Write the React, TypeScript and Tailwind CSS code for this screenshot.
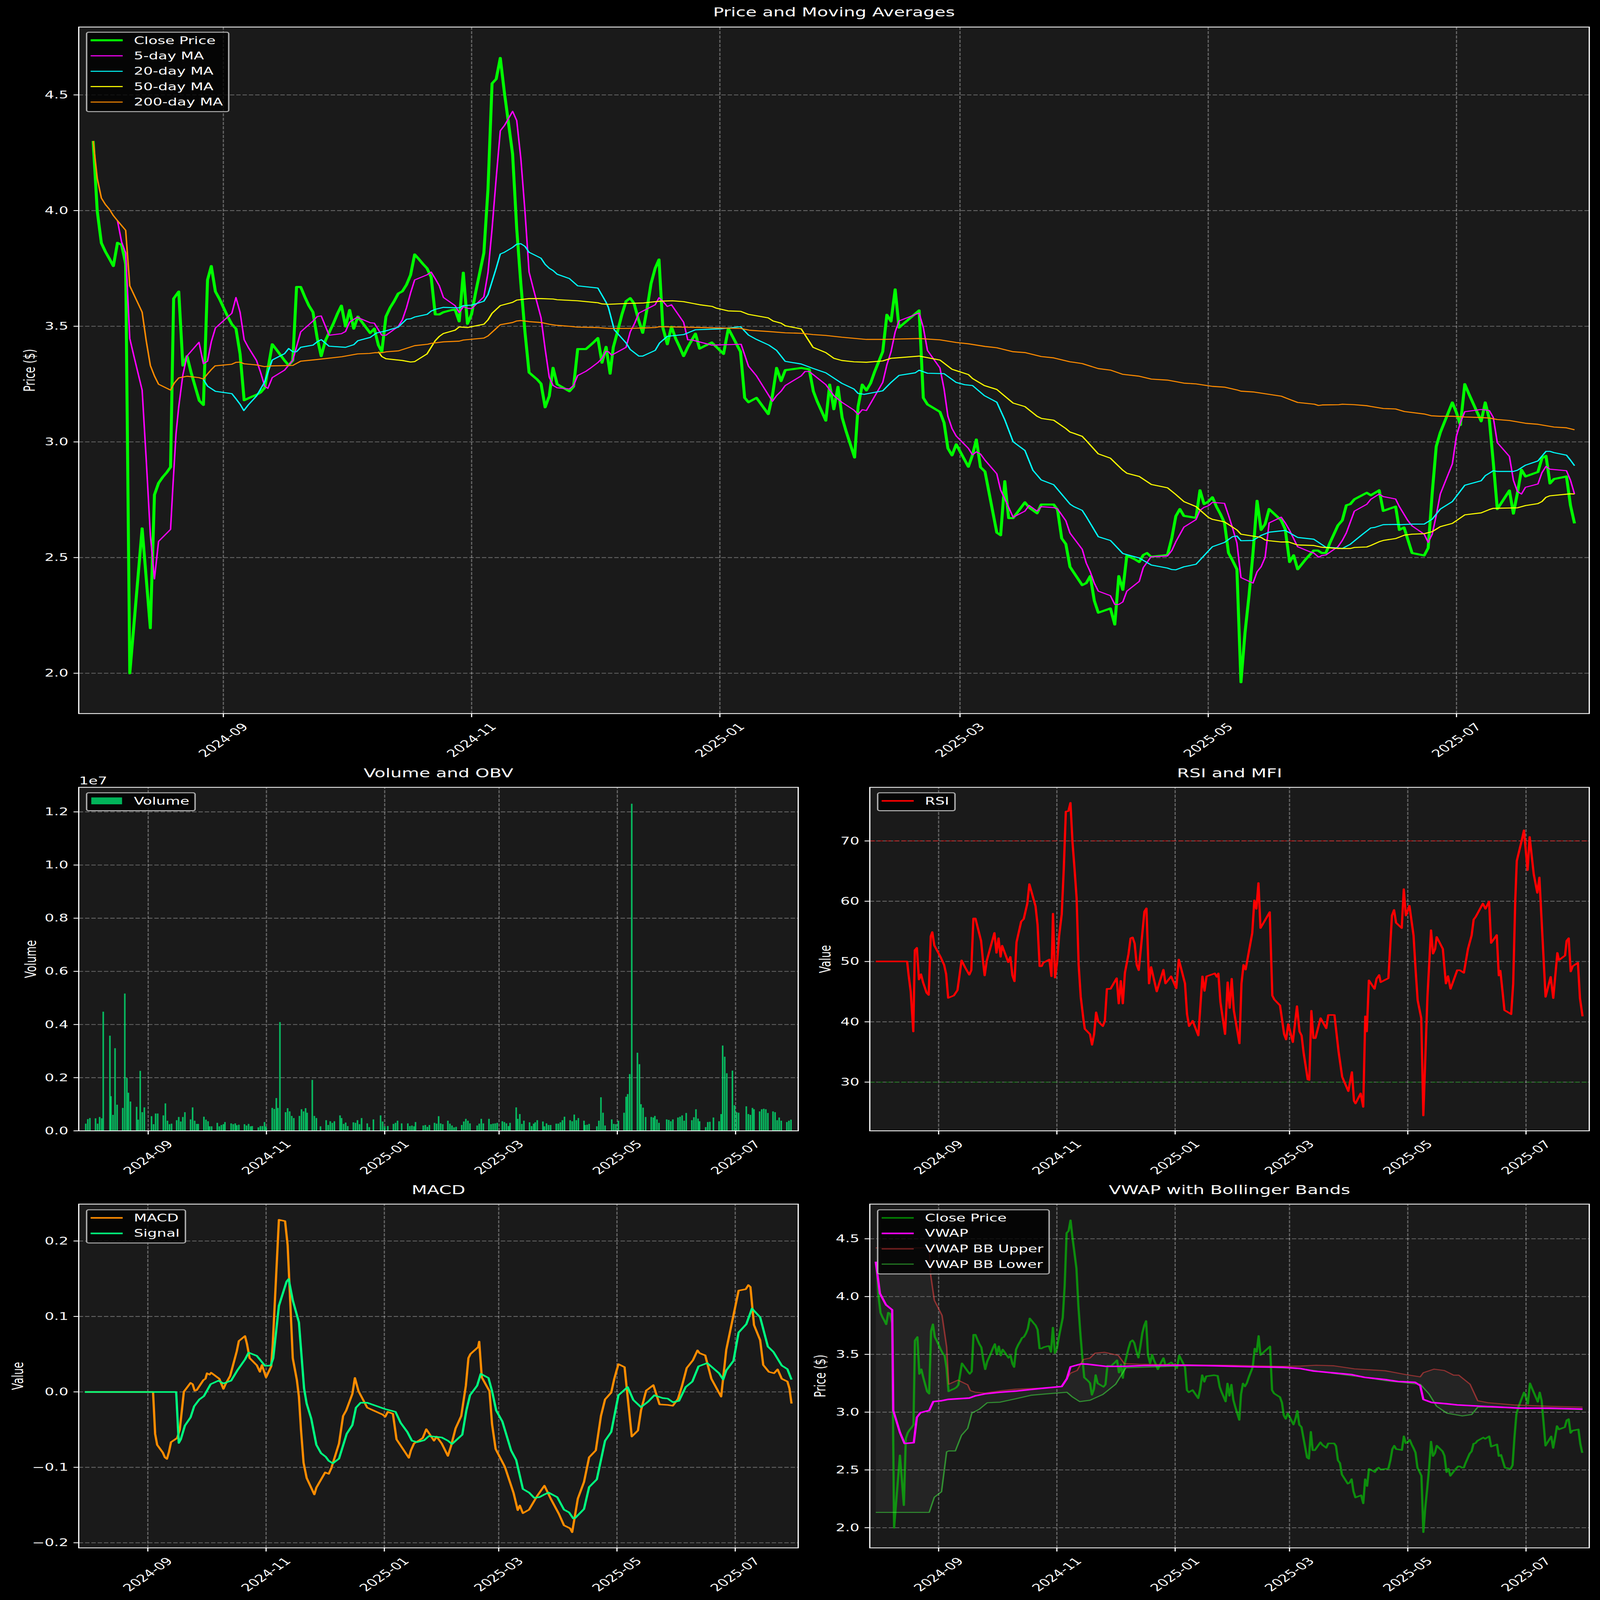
import React from 'react';

type Pt = [number, number];

// turn traced coordinates from a scan of the plot into page pixels
const scan = (ox: number, oy: number, sx: number, sy: number) => (f: number[]): Pt[] => {
  const out: Pt[] = [];
  for (let i = 0; i < f.length; i += 2) out.push([ox + f[i] / sx, oy + f[i + 1] / sy]);
  return out;
};
const z2 = scan(200, 100, 1568 / 1500, 1568 / 1400);
const z3 = scan(200, 1400, 1568 / 1500, 1568 / 1500);
const z4 = scan(1700, 100, 1568 / 1400, 1568 / 2800);
const z5 = scan(3000, 1300, 1568 / 1470, 1568 / 1600);
const z6 = scan(0, 3100, 1568 / 2250, 1568 / 1700);
const z7 = scan(2220, 3100, 1568 / 2250, 1568 / 1700);
const z8 = scan(0, 4750, 1568 / 2250, 1568 / 1757);
const z9 = scan(2220, 4750, 1568 / 2250, 1568 / 1757);

const close: Pt[] = [
  ...z2([63,530,75,850,87,995,99,1035,110,1065,122,1100,134,994,146,1003,158,1090]),
  ...z3([170,1399,206,783,218,995,230,1207,242,640,254,590,266,565,278,545,289,522]),
  ...z2([298,1248,313,1216,325,1553,337,1510]),
  ...z3([349,120,361,180,373,240,385,258]),
  ...z2([397,1163,408,1100,420,1216,432,1250,444,1290,456,1330,468,1365,480,1385,492,1500]),
  ...z3([504,238,516,230,528,222,540,215,552,205,564,185,586,0]),
  ...z2([598,1480,610,1505,622,1530,634,1552,646,1530,657,1195,669,1195,681,1240,693,1280,705,1310,717,1425,729,1510,741,1440,753,1400,765,1360,777,1315,788,1280,800,1375,812,1300,824,1385,836,1330,848,1355,860,1380,872,1405,884,1385,896,1460,906,1490,918,1330,930,1290,942,1260,954,1225,966,1215,978,1185,990,1140,1002,1047,1014,1068,1026,1090,1038,1110,1050,1150,1062,1320,1074,1320,1086,1310,1098,1305,1110,1300,1120,1298,1132,1352,1144,1130,1156,1363,1168,1320,1180,1220,1192,1130,1204,1040,1216,750,1228,268,1240,248,1252,152,1264,310,1276,450,1288,590,1300,930,1312,1180,1324,1400]),
  ...z3([1336,120,1348,135,1360,150,1371,168,1383,268,1395,220,1406,100,1418,170,1430,180,1442,190,1454,200,1466,180]),
  ...z2([1478,1478,1502,1478,1514,1462,1526,1445,1537,1428,1549,1540,1561,1468]),
  ...z4([5,795,15,735,28,700,42,660,55,630,68,623,80,635,93,670,107,702,120,650,133,590,146,555,158,535,170,690,184,728,197,688,210,715,223,735,235,755,248,735,272,704,285,738,298,733,323,724,336,733,360,750,375,692,388,710,413,745,426,850,438,860,463,850,500,887,513,845,526,782,540,812,553,787,603,782,628,785,641,835,653,858,680,902,692,820,705,876,718,825,731,895,743,925,770,986,781,870,794,820,807,833,820,817,833,790,858,745,871,661,884,676,897,603,909,690,972,651,985,850,998,865,1037,882,1050,907,1062,965,1075,981,1088,956,1126,1007,1139,980,1151,945,1164,1008,1178,1018,1215,1157,1227,1163,1240,1040,1252,1124,1266,1124,1303,1088,1316,1100,1341,1113,1354,1093,1393,1093,1405,1105,1418,1170,1431,1183,1444,1235]),
  ...z5([25,1058,37,1050,49,1022,61,1120,73,1168,109,1151,122,1215,134,1022,146,1077,158,940,182,955,195,966,207,938,218,930,230,945,279,938,292,870,304,783,316,755,328,782,364,790,376,680,388,735,401,725,413,708,425,745,437,775,449,810,461,930,473,960,486,995,498,1445,510,1250,522,1100,534,930,546,722,558,838,570,815,582,755,618,800,630,835,643,966,655,939,667,995,691,955,715,920,727,920,739,930,751,930,763,890,775,855,787,820,800,800,812,740,824,735,836,716,873,690,885,700,910,680,922,762,959,745,970,838,984,828,1008,930,1044,940,1056,910,1068,690,1080,505,1092,450,1128,330,1140,370,1152,420,1165,257,1177,295,1214,405,1226,330,1238,395,1250,570,1262,755,1298,681,1310,773,1322,690,1334,598,1346,625,1383,607,1395,552,1407,543,1419,653,1431,635,1468,625,1480,740,1492,812]),
];

const ma5: Pt[] = [
  ...z2([134,893,146,990,158,1040,170,1430,182,1510]),
  ...z3([206,195,218,490,224,650,230,810,242,998,254,838,289,787,296,600,305,380,313,265,325,130,337,50]),
  ...z2([372,1447,385,1545,397,1533,408,1445,420,1382,468,1315,480,1243,492,1310,504,1435,516,1470,540,1530]),
  ...z3([552,120,564,178,573,188,586,142,622,110,646,68]),
  ...z2([669,1400,705,1350,717,1330,729,1327,752,1415,788,1408,800,1398,812,1355,834,1333,872,1358,884,1360,906,1415,918,1415,954,1375,966,1345,978,1290,990,1222,1002,1163,1038,1140,1050,1127,1062,1157,1074,1190,1086,1243,1120,1280,1132,1312,1144,1285,1156,1292,1168,1294,1204,1240,1216,1130,1228,930,1240,700,1252,484,1264,460,1288,395,1300,437,1312,610,1324,850,1336,1127,1348,1200,1371,1335]),
  ...z3([1383,20,1395,140,1406,175,1418,185,1454,190,1466,175,1478,133,1502,115,1514,103,1526,90,1537,78,1549,60,1561,30]),
  ...z4([0,745,10,753,55,735,68,700,82,680,95,657,146,638,158,622,170,630,184,642,197,638,235,678,248,718,260,718,323,730,415,728,438,778,463,800,513,858,526,845,540,835,553,822,603,800,615,790,628,790,680,820,705,845,730,860,768,878,781,888,794,877,807,879,858,815,871,775,884,745,897,700,909,675,972,657,985,690,998,742,1037,782,1050,830,1062,892,1075,920,1088,937,1126,965,1139,980,1151,973,1164,978,1178,992,1215,1023,1227,1060,1240,1080,1266,1122,1303,1108,1316,1095,1341,1108,1354,1098,1393,1100,1405,1103,1431,1130,1444,1158]),
  ...z5([25,915,37,970,49,1005,61,1050,73,1082,109,1100,122,1135,134,1135,146,1125,158,1082,195,1043,207,988,230,945,279,942,292,920,304,885,328,827,364,797,376,760,388,748,401,742,413,728,449,732,461,780,473,830,486,890,498,1028,534,1050,546,1005,558,985,570,948,582,810,618,787,630,810,643,840,667,905,703,925,715,930,730,947,739,940,751,938,787,905,800,880,812,850,836,763,873,736,885,716,910,695,922,705,959,715,970,745,995,800,1008,822,1044,855,1056,888,1068,855,1080,780,1092,695,1128,575,1140,465,1152,410,1165,367,1214,358,1238,362,1250,390,1262,490,1298,545,1310,640,1322,685,1334,695,1346,668,1383,655,1395,610,1407,585,1419,596,1468,602,1480,640,1492,695]),
];

const ma20: Pt[] = [
  ...z3([385,150,397,178,420,200,468,210,480,232,492,255,503,282,516,258,540,220,552,190,564,160,572,125,586,67,622,40,634,18,646,32]),
  ...z2([657,1490,669,1470,705,1460,717,1445,729,1435,752,1465,800,1470,824,1458,836,1440,872,1425,890,1405,918,1395,954,1378,978,1342,990,1340,1002,1332,1038,1320,1050,1305,1062,1297,1086,1288,1132,1290,1144,1280,1168,1278,1204,1260,1216,1230,1240,1110,1252,1045,1264,1037,1288,1015,1300,1000,1312,998,1324,1010,1336,1037,1371,1064,1383,1092,1395,1110,1406,1120,1418,1137,1454,1157,1478,1190,1537,1200,1561,1265]),
  ...z4([0,645,18,695,55,725,68,740,95,755,107,755,146,742,160,725,184,710,235,706,272,695,350,693,413,688,438,707,463,717,502,730,526,742,553,767,603,773,640,783,680,793,730,817,768,830,781,840,800,842,858,834,884,815,909,799,960,793,972,787,998,794,1050,795,1088,815,1114,820,1139,822,1176,845,1215,860,1240,900,1266,950,1303,970,1328,1015,1354,1037,1393,1048,1444,1092]),
  ...z5([0,745,25,760,37,785,73,865,109,880,146,932,195,950,231,978,279,990,292,996,304,997,328,985,364,975,401,922,413,905,449,888,473,865,486,862,498,881,534,880,558,860,582,847,630,840,667,868,715,875,751,907,787,910,800,912,824,895,861,855,885,830,897,828,922,817,960,816,975,817,1008,815,1044,815,1068,795,1092,755,1128,725,1165,660,1214,642,1226,622,1250,602,1262,605,1310,605,1322,600,1346,580,1383,563,1407,525,1419,525,1431,530,1468,540,1480,560,1492,582]),
];

const ma50: Pt[] = [
  ...z2([896,1490,906,1512,918,1522,966,1530,990,1537,1002,1535,1038,1500,1062,1440,1074,1420,1086,1407,1120,1392,1132,1377,1156,1380,1204,1365,1216,1345,1228,1315,1252,1280,1288,1265,1300,1255,1336,1248,1371,1248,1406,1250,1418,1253,1478,1258,1537,1267,1548,1272]),
  ...z4([0,637,60,635,110,634,160,630,200,629,235,631,285,638,325,642,338,646,374,652,413,653,438,660,500,668,515,675,540,680,553,686,603,693,640,735,680,747,705,760,730,765,768,768,807,769,858,766,884,760,972,755,1037,764,1075,785,1088,788,1126,797,1139,806,1176,822,1215,831,1266,862,1303,870,1341,892,1355,897,1393,901,1431,920,1444,928]),
  ...z5([0,453,25,465,37,482,73,535,109,552,146,600,158,612,195,625,231,657,279,670,304,697,328,725,364,745,401,788,413,796,449,806,486,838,498,855,558,868,570,878,582,881,618,886,640,886,667,898,715,900,739,907,787,912,824,912,836,908,873,906,885,900,910,885,922,880,960,872,985,859,1008,855,1044,853,1068,845,1092,825,1128,812,1165,778,1214,770,1238,757,1250,752,1322,750,1346,741,1383,733,1395,725,1407,708,1419,702,1480,694,1492,695]),
];

const ma200: Pt[] = [
  ...z2([63,530,75,700,87,790,99,820,110,840,122,870,134,893,146,915,158,937,170,1190,182,1230,194,1270,206,1310,218,1440]),
  ...z3([230,90,242,135,254,170,289,195,300,165,313,143,337,136,372,142,385,148,396,128,408,108,419,92,468,85,480,77,492,76,504,83,540,88,563,95,586,92,646,90,669,72,717,65,789,53,835,41,870,39,885,36,906,36,920,32,955,28,987,13,1002,6,1040,0]),
  ...z2([1050,1452,1086,1445,1132,1442,1144,1437,1204,1428,1216,1418,1252,1367,1288,1357,1300,1350,1312,1348,1336,1353,1371,1357,1395,1365,1418,1370,1454,1374,1478,1378,1537,1380]),
  ...z4([0,692,60,692,110,691,146,690,160,688,235,689,350,691,413,692,440,696,500,699,553,702,603,703,640,706,680,708,730,712,807,717,858,717,972,715,1037,718,1088,724,1126,727,1178,733,1215,736,1266,745,1303,747,1354,756,1393,759,1444,768]),
  ...z5([0,170,25,175,73,195,109,201,146,218,193,225,231,237,279,241,328,253,364,256,414,266,449,269,486,280,498,285,534,288,618,305,667,330,717,337,729,342,740,340,790,339,800,337,836,339,873,343,885,346,922,354,959,356,985,366,1044,376,1065,383,1092,385,1128,385,1165,388,1214,390,1238,392,1262,398,1298,402,1346,413,1383,417,1431,428,1468,431,1492,439]),
];

const volume = [167,27,171,44,175,48,186,47,190,27,194,52,198,47,201,447,214,357,216,130,220,60,224,310,228,98,239,86,243,515,247,198,250,143,254,110,266,90,269,42,273,225,277,70,281,88,295,55,299,25,303,65,307,65,318,58,322,103,326,38,330,25,334,27,344,40,348,52,352,35,356,52,360,70,371,43,375,88,379,38,383,26,386,26,397,53,401,42,405,36,408,17,412,17,423,30,427,17,431,22,435,25,438,33,450,28,454,25,458,28,461,21,465,23,476,25,480,20,484,26,488,17,491,18,503,13,507,18,511,18,515,33,518,16,530,86,534,82,538,123,541,86,545,408,556,70,560,85,564,73,568,56,572,48,583,56,587,81,591,73,595,85,598,68,608,191,612,56,616,48,624,17,635,40,639,22,643,36,647,30,651,36,662,58,665,48,669,26,673,31,677,18,688,32,692,30,696,40,700,25,704,48,715,28,719,14,727,43,741,58,745,35,749,17,755,18,766,26,770,30,774,38,782,28,794,28,798,18,802,20,806,17,809,33,824,20,828,22,832,15,836,22,846,30,850,27,854,55,858,28,862,25,872,38,876,27,880,20,884,13,888,15,899,22,903,35,907,45,911,38,915,28,929,20,933,27,937,45,941,28,952,45,956,25,960,27,964,28,968,30,978,36,982,33,986,28,990,18,993,30,1005,88,1008,45,1012,63,1016,26,1020,38,1031,32,1035,18,1039,27,1042,32,1046,40,1057,35,1060,17,1064,28,1068,22,1072,22,1083,27,1087,27,1091,32,1095,40,1099,53,1110,40,1114,36,1118,61,1122,40,1126,48,1137,38,1139,22,1143,23,1147,26,1162,17,1166,38,1170,126,1174,68,1178,20,1191,43,1195,26,1199,25,1204,38,1215,68,1219,128,1222,138,1226,213,1230,1227,1241,293,1245,250,1248,100,1252,87,1257,52,1268,52,1272,50,1275,56,1279,43,1283,30,1298,43,1302,41,1306,36,1310,43,1320,50,1324,53,1328,58,1332,38,1336,67,1347,40,1351,51,1355,81,1359,46,1362,36,1374,14,1378,33,1382,34,1389,50,1400,36,1404,63,1407,320,1411,278,1415,216,1426,226,1430,96,1434,70,1438,68,1453,92,1457,63,1461,60,1465,86,1468,81,1479,73,1483,81,1487,83,1491,81,1495,67,1505,73,1509,70,1513,40,1517,50,1521,38,1532,33,1536,38,1540,42];

const rsi = z7([158,747,219,747,222,800,226,860,231,1010,234,705,238,696,242,815,246,795,250,825,257,865,261,873,265,653,268,637,272,687,284,730,291,760,295,795,299,884,310,875,317,855,321,800,325,743,332,770,340,797,344,780,348,586,352,586,363,670,367,750,370,800,374,745,389,640,393,715,397,660,401,730,404,688,416,750,420,730,424,800,428,822,432,675,441,598,446,588,453,530,457,457,469,540,473,610,477,765,481,765,484,752,496,740,500,803,503,568,507,808,511,750,515,650,520,570,524,400,528,185,533,183,537,152,541,300,545,400,549,510,553,760,557,880,562,960,565,1000,575,1020,579,1060,583,1020,587,938,591,972,600,990,604,970,608,850,615,850,627,810,631,905,635,820,639,905,643,790,650,720,654,660,658,657,662,680,666,760,670,780,674,700,681,560,685,548,690,830,694,768,705,860,718,778,722,830,733,803,743,848,748,740,760,830,764,945,768,990,775,970,786,1025,794,803,798,858,802,803,818,792,822,805,825,792,829,900,838,1020,843,825,847,922,851,812,855,930,866,1055,870,830,874,760,878,778,891,640,895,518,899,550,903,453,907,622,925,562,930,875,934,890,945,912,953,1020,957,1040,961,982,970,1050,978,915,983,1010,987,1025,991,1090,999,1190,1002,1192,1006,932,1010,1035,1014,1035,1024,960,1035,998,1039,948,1051,948,1059,1085,1066,1180,1078,1234,1085,1162,1089,1270,1092,1280,1102,1242,1107,1293,1111,953,1114,1010,1118,818,1129,850,1133,812,1138,798,1141,825,1156,810,1163,575,1167,554,1171,602,1182,622,1186,476,1190,575,1197,538,1205,650,1209,780,1213,893,1220,960,1224,1325,1232,880,1239,630,1243,718,1247,700,1250,655,1262,700,1268,830,1272,802,1277,850,1290,780,1295,780,1303,790,1311,700,1318,650,1322,590,1326,580,1340,530,1345,550,1352,522,1356,678,1367,648,1371,800,1374,782,1382,930,1395,945,1399,830,1403,520,1406,370,1416,290,1420,255,1427,405,1431,280,1439,420,1446,490,1450,432,1455,620,1462,880,1472,805,1477,885,1485,715,1488,742,1500,725,1503,670,1507,660,1511,785,1515,765,1525,752,1529,885,1534,953]);

const macd = z8([165,813,298,813,302,965,306,1005,317,1033,321,1050,325,1056,329,1030,333,995,345,980,350,950,358,812,371,780,375,785,379,808,383,806,396,770,400,765,403,745,408,750,411,743,427,765,435,802,439,785,448,755,461,665,465,628,477,610,481,640,486,690,500,716,506,740,510,715,518,760,528,720,531,640,539,340,543,188,555,193,560,280,565,480,570,690,578,770,582,830,586,950,591,1070,597,1125,612,1185,616,1160,633,1105,640,1110,645,1090,660,1000,668,900,674,880,686,820,691,762,698,810,715,870,727,880,745,895,750,903,755,885,765,892,772,985,796,1052,800,1025,806,1000,815,990,823,980,830,948,845,990,850,975,860,1000,872,1045,878,1010,887,945,898,900,907,790,912,690,916,675,931,650,933,630,938,760,953,810,958,930,965,1020,983,1085,1000,1180,1008,1242,1012,1225,1018,1253,1030,1240,1046,1190,1060,1153,1073,1203,1088,1255,1098,1297,1110,1308,1114,1322,1125,1200,1137,1140,1147,1050,1160,1025,1170,900,1178,840,1190,815,1196,765,1204,712,1216,723,1230,975,1242,953,1248,880,1258,808,1272,788,1284,858,1300,860,1310,863,1320,838,1328,790,1337,726,1349,698,1358,662,1362,672,1373,680,1385,765,1404,830,1414,660,1433,490,1438,445,1452,440,1457,425,1461,432,1468,570,1480,625,1486,715,1497,740,1507,745,1514,731,1522,765,1533,775,1537,800,1541,855]);

const signal = z8([165,813,343,813,348,998,352,985,360,935,371,905,378,865,388,840,397,828,410,785,425,772,435,782,450,772,462,735,477,695,484,670,500,682,516,718,527,717,532,690,543,500,558,412,562,403,570,480,582,560,592,800,597,855,606,910,616,1005,625,1035,634,1048,640,1063,648,1072,660,1055,675,965,686,933,693,870,702,852,715,852,730,862,750,875,770,885,780,925,793,958,802,990,812,995,826,988,835,973,860,978,872,990,880,1002,890,985,900,968,908,880,915,825,929,790,936,747,951,762,958,810,966,880,978,920,995,1025,1005,1060,1018,1165,1030,1178,1040,1197,1050,1195,1060,1185,1068,1178,1085,1195,1098,1240,1108,1250,1116,1272,1120,1270,1137,1238,1147,1158,1162,1130,1178,990,1190,958,1204,825,1222,795,1233,842,1248,868,1262,848,1274,825,1290,835,1300,837,1310,850,1322,845,1335,795,1348,775,1360,720,1377,708,1400,745,1408,768,1414,735,1428,700,1438,597,1453,567,1464,510,1480,542,1495,648,1506,668,1522,717,1533,730,1541,768]);

const vwap = z9([158,340,166,455,178,497,190,515,192,880,205,960,214,1000,232,997,238,905,245,888,262,880,270,848,285,845,298,840,340,835,352,827,370,820,400,814,430,810,465,803,480,800,520,793,530,765,537,722,558,711,570,712,606,720,640,720,680,717,760,716,820,718,900,722,950,723,985,728,1010,737,1050,744,1085,750,1110,760,1150,768,1175,775,1208,778,1218,790,1224,840,1240,851,1270,856,1290,860,1340,865,1395,870,1410,872,1470,872,1534,875]);
const bbUpper = z9([158,290,262,290,265,390,272,480,287,535,296,650,300,785,318,770,337,787,342,808,352,814,370,817,403,808,430,803,500,797,520,793,537,745,550,735,562,695,575,690,585,672,603,669,630,680,642,710,670,712,740,714,850,716,950,720,985,719,1015,716,1050,718,1090,729,1150,736,1190,750,1218,758,1224,743,1245,730,1265,735,1283,752,1293,752,1315,785,1330,845,1350,852,1400,860,1470,865,1534,868]);
const bbLower = z9([158,1250,262,1250,272,1195,286,1175,296,1030,300,1027,313,1027,325,970,337,945,345,890,360,875,375,852,400,850,430,838,460,825,490,820,530,814,540,830,555,848,575,843,600,822,625,785,640,740,645,725,700,722,760,718,820,718,900,722,985,728,1050,746,1110,760,1150,772,1218,785,1235,820,1250,865,1270,890,1300,900,1318,895,1330,868,1400,870,1534,877]);

// the close series again, rescaled from the big chart to the VWAP chart
const closeSmall: Pt[] = close.map(([x, y]) => {
  const day = (x - 624) / 11.37;
  const price = 2 + (2738 - y) / 940.8;
  return [2622.3 + day * 5.416, 6213 - (price - 2) * 470];
});

const months = ['2024-09', '2024-11', '2025-01', '2025-03', '2025-05', '2025-07'];
const days = [0, 61, 122, 181, 242, 303];

type Box = { left: number; top: number; right: number; bottom: number };

function toPoints(p: Pt[]) {
  return p.map(([x, y]) => `${x.toFixed(1)},${y.toFixed(1)}`).join(' ');
}

function Line({ pts, color, w = 4.17, opacity = 1 }: { pts: Pt[]; color: string; w?: number; opacity?: number }) {
  return <polyline points={toPoints(pts)} fill="none" stroke={color} strokeWidth={w} strokeOpacity={opacity} strokeLinejoin="round" />;
}

function Plot({ box, x0, xk, panelLeft, panelWidth, height, yticks, yLabel, yLabelX, children }: {
  box: Box; x0: number; xk: number; panelLeft: number; panelWidth: number; height: number;
  yticks: [string, number][]; yLabel: string; yLabelX: number; children?: React.ReactNode;
}) {
  const xs = days.map((d) => x0 + d * xk);
  const midY = (box.top + box.bottom) / 2;
  return (
    <svg
      width={panelWidth}
      height={height}
      viewBox={`${panelLeft} ${box.top} ${panelWidth} ${height}`}
      className="block overflow-visible"
    >
      <rect x={box.left} y={box.top} width={box.right - box.left} height={box.bottom - box.top} fill="#1a1a1a" />
      <g stroke="#ffffff" strokeOpacity={0.33} strokeWidth={3.33} strokeDasharray="12.3 5.3">
        {xs.map((x) => <line key={x} x1={x} x2={x} y1={box.bottom} y2={box.top} />)}
        {yticks.map(([l, y]) => <line key={l} x1={box.left} x2={box.right} y1={y} y2={y} />)}
      </g>
      {children}
      <rect x={box.left} y={box.top} width={box.right - box.left} height={box.bottom - box.top} fill="none" stroke="#ffffff" strokeWidth={3.33} />
      <g stroke="#ffffff" strokeWidth={3.33}>
        {xs.map((x) => <line key={x} x1={x} x2={x} y1={box.bottom} y2={box.bottom + 14.6} />)}
        {yticks.map(([l, y]) => <line key={l} x1={box.left - 14.6} x2={box.left} y1={y} y2={y} />)}
      </g>
      <g className="fill-white text-[41.67px]">
        {yticks.map(([l, y]) => (
          <text key={l} x={box.left - 29} y={y} textAnchor="end" dominantBaseline="central">{l}</text>
        ))}
        {xs.map((x, i) => (
          <text key={x} transform={`translate(${x} ${box.bottom + 108}) rotate(-45)`} textAnchor="middle" dominantBaseline="central">{months[i]}</text>
        ))}
        <text
          transform={`translate(${yLabelX} ${midY}) rotate(-90)`}
          textAnchor="middle"
          dominantBaseline="central"
        >
          {yLabel}
        </text>
      </g>
    </svg>
  );
}

type Item = { label: string; color: string; w?: number; opacity?: number; patch?: boolean };

function Legend({ items, className }: { items: Item[]; className: string }) {
  return (
    <div className={`absolute flex flex-col rounded-[8px] border-[4px] border-[#adadad] bg-black/80 pb-[6px] pr-[14px] text-[41.67px] leading-none text-white ${className}`}>
      {items.map((it) => (
        <div key={it.label} className="flex h-[62.7px] items-center gap-[31px] pl-[9px] whitespace-nowrap">
          <svg width={90} height={30} className="block">
            {it.patch ? (
              <rect x={2} y={1} width={86} height={28} fill={it.color} fillOpacity={it.opacity ?? 1} />
            ) : (
              <line x1={0} x2={90} y1={15} y2={15} stroke={it.color} strokeWidth={it.w ?? 4.17} strokeOpacity={it.opacity ?? 1} />
            )}
          </svg>
          <span>{it.label}</span>
        </div>
      ))}
    </div>
  );
}

function tickFrom(labels: string[], first: number, step: number): [string, number][] {
  return labels.map((l, i) => [l, first + i * step]);
}

export default function App() {
  const mainBox = { left: 220, top: 110, right: 4440, bottom: 2902 };
  const volBox = { left: 220, top: 3202, right: 2230, bottom: 4599 };
  const rsiBox = { left: 2430, top: 3202, right: 4440, bottom: 4599 };
  const macdBox = { left: 220, top: 4897, right: 2230, bottom: 6295 };
  const vwapBox = { left: 2430, top: 4897, right: 4440, bottom: 6295 };

  // the sheet is 4470x6507; fit it to whatever window it really gets (1 at full size)
  const fit = { x: window.innerWidth / 4470, y: window.innerHeight / 6507 };

  return (
    <div className="h-screen w-screen overflow-hidden bg-black">
      <div
        className="flex h-[6507px] w-[4470px] origin-top-left flex-col bg-black font-['DejaVu_Sans',sans-serif] text-white"
        style={{ transform: `scale(${fit.x}, ${fit.y})` }}
      >
        <section className="h-[3088px]">
          <h2 className="flex h-[110px] items-start justify-center pl-[220px] pr-[30px] pt-[22px] text-[50px] font-normal leading-[56px]">
            Price and Moving Averages
          </h2>
          <div className="relative">
            <Plot
              box={mainBox}
              x0={624}
              xk={11.37}
              panelLeft={0}
              panelWidth={4470}
              height={2978}
              yticks={tickFrom(['4.5', '4.0', '3.5', '3.0', '2.5', '2.0'], 386, 470.4)}
              yLabel="Price ($)"
              yLabelX={83}
            >
              <Line pts={close} color="#00ff00" w={8.33} />
              <Line pts={ma5} color="#ff00ff" />
              <Line pts={ma20} color="#00ffff" />
              <Line pts={ma50} color="#ffff00" />
              <Line pts={ma200} color="#ff8c00" />
            </Plot>
            <Legend
              className="left-[240px] top-[19px]"
              items={[
                { label: 'Close Price', color: '#00ff00', w: 8.33 },
                { label: '5-day MA', color: '#ff00ff' },
                { label: '20-day MA', color: '#00ffff' },
                { label: '50-day MA', color: '#ffff00' },
                { label: '200-day MA', color: '#ff8c00' },
              ]}
            />
          </div>
        </section>

        <section className="grid h-[1695px] grid-cols-2">
          <div>
            <h2 className="flex h-[114px] items-center justify-center pl-[220px] pr-[5px] text-[50px] font-normal leading-none">Volume and OBV</h2>
            <div className="relative">
              <Plot
                box={volBox}
                x0={414}
                xk={5.416}
                panelLeft={0}
                panelWidth={2235}
                height={1581}
                yticks={tickFrom(['0.0', '0.2', '0.4', '0.6', '0.8', '1.0', '1.2'], 4599, -216.2)}
                yLabel="Volume"
                yLabelX={86}
              >
                {z6(volume).map(([x, h], i) => (
                  <rect key={i} x={x - 2.2} y={4599 - (h - 3100)} width={4.4} height={h - 3100} fill="#00ff7f" fillOpacity={0.7} />
                ))}
                <text x={221} y={3176} dominantBaseline="central" className="fill-white text-[41.67px]">1e7</text>
              </Plot>
              <Legend className="left-[240px] top-[20px]" items={[{ label: 'Volume', color: '#00ff7f', opacity: 0.7, patch: true }]} />
            </div>
          </div>
          <div>
            <h2 className="flex h-[114px] items-center justify-center pl-[195px] pr-[30px] text-[50px] font-normal leading-none">RSI and MFI</h2>
            <div className="relative">
              <Plot
                box={rsiBox}
                x0={2622.3}
                xk={5.416}
                panelLeft={2235}
                panelWidth={2235}
                height={1581}
                yticks={tickFrom(['70', '60', '50', '40', '30'], 3420, 245.2)}
                yLabel="Value"
                yLabelX={2306}
              >
                <line x1={2430} x2={4440} y1={3420} y2={3420} stroke="#ff0000" strokeOpacity={0.5} strokeWidth={4.17} strokeDasharray="15.4 6.7" />
                <line x1={2430} x2={4440} y1={4401} y2={4401} stroke="#008000" strokeOpacity={0.5} strokeWidth={4.17} strokeDasharray="15.4 6.7" />
                <Line pts={rsi} color="#ff0000" w={6.25} />
              </Plot>
              <Legend className="left-[215px] top-[20px]" items={[{ label: 'RSI', color: '#ff0000', w: 6.25 }]} />
            </div>
          </div>
        </section>

        <section className="grid h-[1724px] grid-cols-2">
          <div>
            <h2 className="flex h-[114px] items-center justify-center pl-[220px] pr-[5px] text-[50px] font-normal leading-none">MACD</h2>
            <div className="relative">
              <Plot
                box={macdBox}
                x0={413}
                xk={5.416}
                panelLeft={0}
                panelWidth={2235}
                height={1610}
                yticks={tickFrom(['0.2', '0.1', '0.0', '−0.1', '−0.2'], 5047, 306.8)}
                yLabel="Value"
                yLabelX={50}
              >
                <Line pts={macd} color="#ff8c00" w={6.25} />
                <Line pts={signal} color="#00ff7f" w={6.25} />
              </Plot>
              <Legend
                className="left-[240px] top-[21px]"
                items={[
                  { label: 'MACD', color: '#ff8c00', w: 6.25 },
                  { label: 'Signal', color: '#00ff7f', w: 6.25 },
                ]}
              />
            </div>
          </div>
          <div>
            <h2 className="flex h-[114px] items-center justify-center pl-[195px] pr-[30px] text-[50px] font-normal leading-none">VWAP with Bollinger Bands</h2>
            <div className="relative">
              <Plot
                box={vwapBox}
                x0={2622.3}
                xk={5.416}
                panelLeft={2235}
                panelWidth={2235}
                height={1610}
                yticks={tickFrom(['4.5', '4.0', '3.5', '3.0', '2.5', '2.0'], 5038, 235)}
                yLabel="Price ($)"
                yLabelX={2292}
              >
                <polygon points={toPoints([...bbUpper, ...[...bbLower].reverse()])} fill="#808080" fillOpacity={0.1} />
                <Line pts={closeSmall} color="#00ff00" w={6.25} opacity={0.5} />
                <Line pts={bbUpper} color="#ff4444" opacity={0.5} />
                <Line pts={bbLower} color="#44ff44" opacity={0.5} />
                <Line pts={vwap} color="#ff00ff" w={6.25} />
              </Plot>
              <Legend
                className="left-[215px] top-[21px]"
                items={[
                  { label: 'Close Price', color: '#00ff00', w: 6.25, opacity: 0.5 },
                  { label: 'VWAP', color: '#ff00ff', w: 6.25 },
                  { label: 'VWAP BB Upper', color: '#ff4444', opacity: 0.5 },
                  { label: 'VWAP BB Lower', color: '#44ff44', opacity: 0.5 },
                ]}
              />
            </div>
          </div>
        </section>
      </div>
    </div>
  );
}
